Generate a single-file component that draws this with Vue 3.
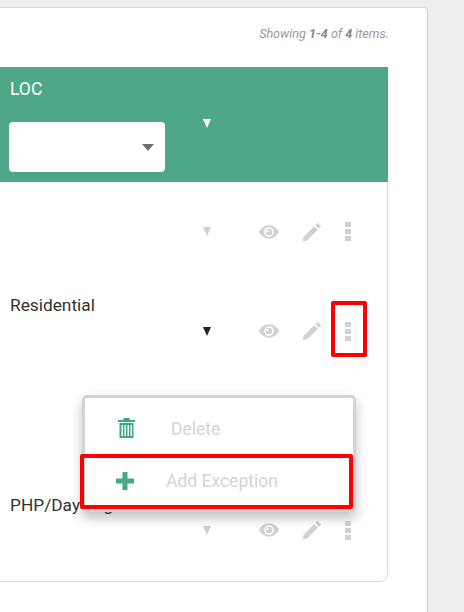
<template>
  <div class="page">
    <div class="card">
      <div class="summary">Showing <b>1-4</b> of <b>4</b> items.</div>
      <div class="grid-wrap">
        <div class="grid-head">
          <div class="col-loc">
            <div class="head-label">LOC</div>
            <div class="filter-select"><span class="select-caret" /></div>
          </div>
          <div class="col-caret"><span class="tri tri-white" /></div>
        </div>
        <div v-for="row in rows" :key="row.id" class="grid-row">
          <div class="col-loc row-text">{{ row.text }}</div>
          <div class="col-caret"><span class="tri" :class="row.dark ? 'tri-dark' : 'tri-grey'" /></div>
          <div class="row-actions">
            <svg class="ic-eye" viewBox="0 0 24 16" width="20" height="14">
              <path fill-rule="evenodd" d="M12 0C6.500 0 2.200 3.400 0 8c2.200 4.600 6.500 8 12 8s9.800-3.400 12-8c-2.200-4.600-6.500-8-12-8zM12 2.200a5.800 5.800 0 1 1 0 11.600a5.800 5.800 0 0 1 0-11.600z" />
              <path fill-rule="evenodd" d="M12 4a4 4 0 1 0 0 8a4 4 0 0 0 0-8zM10.200 5.400a1.500 1.500 0 1 1 0 3a1.500 1.500 0 0 1 0-3z" />
            </svg>
            <svg class="ic-pencil" viewBox="0 0 20 20" width="20" height="20">
              <path d="M15.600 0.800l3.600 3.600-2.300 2.300-3.600-3.600zM12.200 4.200l3.600 3.600L5.200 18.400 0.800 19.200l0.800-4.400z" />
            </svg>
            <div class="ic-dots"><i /><i /><i /></div>
          </div>
        </div>
      </div>
    </div>

    <div class="action-menu">
      <div class="menu-item">
        <svg class="ic-trash" viewBox="0 0 17 20" width="17" height="20">
          <path fill-rule="evenodd" d="M6 0h5l1 2h5v2H0V2h5zM1.500 5h14v15h-14zM3.500 7v11h1.500V7zM6.500 7v11H8V7zM9.500 7v11H11V7zM12.500 7v11H14V7z" />
        </svg>
        <span class="item-delete">Delete</span>
      </div>
      <div class="menu-item menu-item-add">
        <svg class="ic-plus" viewBox="0 0 18 18" width="18" height="18">
          <path d="M6.500 0h5v6.500H18v5h-6.500V18h-5v-6.500H0v-5h6.500z" />
        </svg>
        <span class="item-add">Add Exception</span>
      </div>
    </div>

    <div class="mark mark-dots" />
    <div class="mark mark-add" />
  </div>
</template>

<script setup>
const rows = [
  { id: 1, text: '' },
  { id: 2, text: 'Residential', dark: true },
  { id: 3, text: '' },
  { id: 4, text: 'PHP/Day Log' },
]
</script>

<style scoped>
.page {
  position: relative;
  width: 464px;
  height: 612px;
  overflow: hidden;
  padding-top: 7px;
  box-sizing: border-box;
  background: #eeeeee;
  font-family: Roboto, "Liberation Sans", sans-serif;
}

.card {
  width: 428px;
  height: 605px;
  box-sizing: border-box;
  padding-top: 20px;
  background: #fff;
  border-top: 1px solid #dcdcdc;
  border-right: 1px solid #d2d2d2;
  border-top-right-radius: 4px;
}

.summary {
  width: 389px;
  height: 39px;
  text-align: right;
  font-size: 12.6px;
  line-height: 12px;
  font-style: italic;
  color: #999;
}

.summary b {
  color: #888;
}

.grid-wrap {
  width: 388px;
  height: 515px;
  box-sizing: border-box;
  border-right: 1px solid #cfe0da;
  border-bottom: 1px solid #cfe0da;
  border-bottom-right-radius: 8px;
}

.grid-head {
  display: flex;
  width: 388px;
  height: 115px;
  background: #4ea887;
  color: #fff;
}

.col-loc {
  width: 165px;
  flex: none;
  padding-left: 9px;
  box-sizing: content-box;
}

.head-label {
  padding-top: 12px;
  padding-left: 1px;
  font-size: 17.500px;
  line-height: 20px;
}

.filter-select {
  display: flex;
  align-items: center;
  justify-content: flex-end;
  width: 156px;
  height: 50px;
  margin-top: 23px;
  padding-right: 11px;
  box-sizing: border-box;
  background: #fff;
  border-radius: 4px;
}

.select-caret {
  width: 0;
  height: 0;
  border-left: 6px solid transparent;
  border-right: 6px solid transparent;
  border-top: 7px solid #6f6f6f;
}

.col-caret {
  flex: none;
  width: 23px;
  display: flex;
  justify-content: center;
  padding-left: 21px;
}

.grid-head .col-caret {
  padding-top: 52px;
  box-sizing: content-box;
}

.tri {
  display: block;
  width: 0;
  height: 0;
  border-left: 4.500px solid transparent;
  border-right: 4.500px solid transparent;
  border-top: 9px solid #ccc;
}

.tri-white {
  border-top-color: #fff;
}

.tri-dark {
  border-top-color: #222;
}

.tri-grey {
  border-top-color: #cfcfcf;
}

.grid-row {
  display: flex;
  align-items: center;
  height: 100px;
  font-size: 17.300px;
  color: #333;
}

.grid-row:nth-child(2) {
  height: 99px;
}

.grid-row:last-child {
  height: 98px;
}

.row-text {
  align-self: flex-start;
  padding-top: 14px;
  padding-left: 10px;
  width: 164px;
  line-height: 20px;
  white-space: nowrap;
}

.row-actions {
  display: flex;
  align-items: center;
  margin-left: 41px;
  gap: 23px;
}

.row-actions svg {
  fill: #d2d2d2;
  display: block;
}

.ic-dots {
  display: flex;
  flex-direction: column;
  gap: 2px;
}

.ic-dots i {
  display: block;
  width: 6px;
  height: 5px;
  background: #d2d2d2;
}

.action-menu {
  position: absolute;
  left: 82px;
  top: 395px;
  width: 274px;
  height: 117px;
  box-sizing: border-box;
  background: #fff;
  border: 3px solid #d3d3d3;
  border-radius: 5px;
  box-shadow: 0 6px 12px rgba(0, 0, 0, 0.25);
  font-size: 17.500px;
  color: #d4d4d4;
}

.menu-item {
  display: flex;
  align-items: center;
  height: 60px;
}

.ic-trash {
  margin-left: 33px;
  fill: #3fa689;
}

.item-delete {
  margin-left: 36px;
  padding-top: 2px;
}

.menu-item-add {
  height: 46px;
}

.ic-plus {
  margin-left: 31px;
  fill: #43a98a;
}

.item-add {
  margin-left: 32px;
}

.mark {
  position: absolute;
  box-sizing: border-box;
  border: 4px solid #fe0000;
  border-radius: 2px;
}

.mark-dots {
  left: 331px;
  top: 301px;
  width: 36px;
  height: 56px;
}

.mark-add {
  left: 80px;
  top: 454px;
  width: 273px;
  height: 55px;
}
</style>

<style>
html,
body {
  margin: 0;
  background: #eeeeee;
}
</style>
